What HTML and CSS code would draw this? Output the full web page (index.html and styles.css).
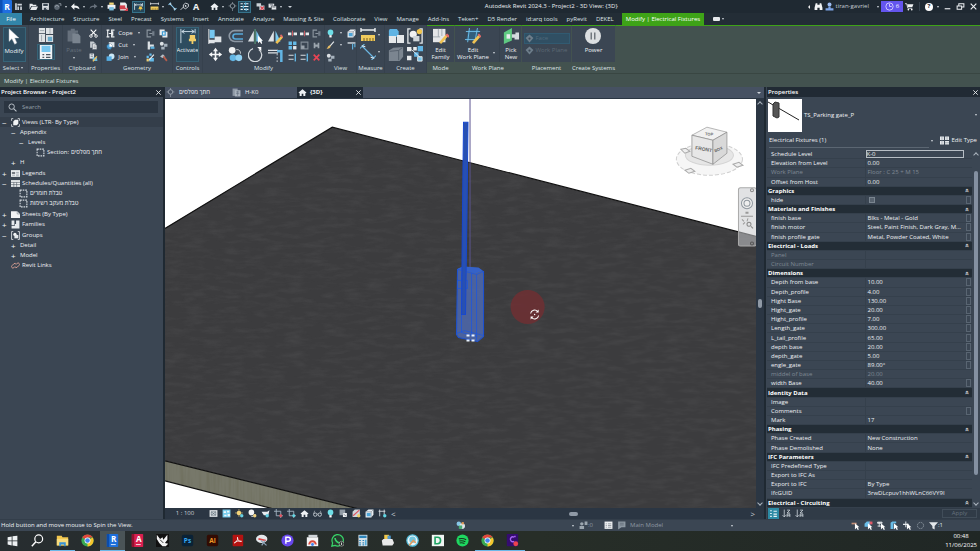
FILE: index.html
```html
<!DOCTYPE html>
<html lang="en">
<head>
<meta charset="utf-8">
<title>Autodesk Revit 2024.3 - Project2 - 3D View: {3D}</title>
<link rel="stylesheet" href="styles.css">
</head>
<body>
<svg class="defs" aria-hidden="true">
  <symbol id="home" viewBox="0 0 16 16"><path d="M1 8 8 2l7 6-1 1.500-1-.8V14H9.500v-4h-3v4H3V8.700l-1 .8z" fill="#eef1f4"/></symbol>
  <symbol id="start" viewBox="0 0 16 16"><path d="M2 2h3v12H2zM6 3h8v3H6zM6 8h3v6H6zM11 8h3v6h-3z" fill="#cdd3da"/></symbol>
  <symbol id="plan" viewBox="0 0 16 16"><path d="M1 1h9v13H1z" fill="#8d97a4"/><path d="M5 4h10v11H5z" fill="#aab3be"/><path d="M7 7h6M7 10h6M10 5v9" stroke="#5a6575"/></symbol>
  <symbol id="open" viewBox="0 0 16 16"><path d="M1 3h5l1 2h6v2H4l-3 6zM5 8h11l-3 6H2z" fill="#e8ebee"/></symbol>
  <symbol id="save" viewBox="0 0 16 16"><path d="M2 2h12v12H2z" fill="#dfe3e7"/><path d="M4 3h8v4H4zM5 10h6v4H5z" fill="#3a4652"/><path d="M9 10.500h1.500V13H9z" fill="#dfe3e7"/></symbol>
  <symbol id="sync" viewBox="0 0 16 16"><circle cx="7" cy="9" r="5" fill="#5c6772"/><path d="M4 9a3 3 0 0 1 6 0M10 3h4v4" fill="none" stroke="#929ba4" stroke-width="1.600"/></symbol>
  <symbol id="undo" viewBox="0 0 16 16"><path d="M6 2v4c6 0 9 2 9 7-2-2-5-3-9-3v4L0 8z" fill="#f1f3f5"/></symbol>
  <symbol id="redo" viewBox="0 0 16 16"><path d="M9 3v3c-5 0-8 2-8 6 2-2 4-3 8-3v3l6-4.500z" fill="#68727d"/></symbol>
  <symbol id="print" viewBox="0 0 16 16"><path d="M4 1h8v4H4z" fill="#f3d774"/><path d="M1 5h14v7H1z" fill="#eef1f4"/><path d="M4 9h8v6H4z" fill="#7cc0e0"/></symbol>
  <symbol id="pdf" viewBox="0 0 16 16"><path d="M2 1h9l3 3v11H2z" fill="#eceff1"/><path d="M1 6h10v7H1z" fill="#d4424e"/><path d="M9 9l6 6M15 10v5h-5" stroke="#d4424e" stroke-width="2" fill="none"/></symbol>
  <symbol id="dimbox" viewBox="0 0 16 16"><path d="M1 2v12M15 2v6M2 5h12M4 3 2 5l2 2M12 3l2 2-2 2" stroke="#dfe8ef" stroke-width="1.400" fill="none"/><path d="M9 8h5v3h1v2h-3v2h-1v-2H8v-2h1z" fill="#f2c84b"/></symbol>
  <symbol id="ruler" viewBox="0 0 16 16"><path d="M1 3h14M1 1v4M15 1v4" stroke="#eceff1" stroke-width="1.400"/><path d="M1 8h14v6H1z" fill="#f0cb5d"/><path d="M4 11v3M7 11v3M10 11v3M13 11v3" stroke="#765f20"/></symbol>
  <symbol id="dim" viewBox="0 0 16 16"><path d="M3 3l10 10M5 1 1 5M15 11l-4 4" stroke="#82c4ea" stroke-width="1.800"/><path d="M3 3l3 1M13 13l-3-1" stroke="#e9edf1" stroke-width="2"/></symbol>
  <symbol id="tag" viewBox="0 0 16 16"><path d="M1 14 6 9" stroke="#dfe3e7" stroke-width="1.500"/><path d="M6 5l4-3 5 2v4l-5 4-4-2z" fill="none" stroke="#dfe3e7" stroke-width="1.500"/><circle cx="10" cy="7" r="1.500" fill="#dfe3e7"/></symbol>
  <symbol id="section" viewBox="0 0 16 16"><circle cx="8" cy="7" r="4" fill="none" stroke="#aab3bc" stroke-width="1.300"/><path d="M8 0v3M8 11v5M1 7h3M12 7h3" stroke="#aab3bc"/></symbol>
  <symbol id="thin" viewBox="0 0 16 16"><path d="M1 3h4M7 3h8M1 8h4M7 8h8M1 13h4M7 13h8" stroke="#eef3f7" stroke-width="2"/><path d="M10 1v5M6 6v5M11 11v5" stroke="#57b6df" stroke-width="2"/></symbol>
  <symbol id="closehidden" viewBox="0 0 16 16"><path d="M1 2h8v6H1zM6 6h9v8H6z" fill="#c9d0d6"/><path d="M8 8l6 6M14 8l-6 6" stroke="#e04550" stroke-width="2"/></symbol>
  <symbol id="switch" viewBox="0 0 16 16"><path d="M1 3h10v7H1z" fill="#e7eaed"/><path d="M6 7h9v7H6z" fill="#e7eaed" stroke="#222b34"/><path d="M3 5h6M8 9h5" stroke="#46515c" stroke-width="1.300"/></symbol>
  <symbol id="arrow" viewBox="0 0 16 24"><path d="M1 1v18l4-4 4 8 3-2-3-7h6z" fill="#fff" stroke="#c4cad0" stroke-width=".6"/></symbol>
  <symbol id="family" viewBox="0 0 18 18"><path d="M1 1h7v6H1zM9 1h8v7H9zM1 8h7v9H1zM9 9h8v8H9z" fill="#dfe2e5"/><path d="M2 4h5M13.500 1v7M4 9v7" stroke="#9da5ad"/><path d="M11 11h5v5h-5z" fill="#68a9c9"/></symbol>
  <symbol id="props" viewBox="0 0 18 18"><path d="M2 0h14v18H2z" fill="#f0f2f4"/><path d="M4 2h10v7H4z" fill="#75c6ef"/><path d="M5 12h2M9 12h5M5 15h2M9 15h5" stroke="#4c5660" stroke-width="1.500"/></symbol>
  <symbol id="paste" viewBox="0 0 18 20"><path d="M1 3h4V1h5v2h4v3h-3v11H1z" fill="#66707c"/><path d="M7 7h7l3 3v9H7z" fill="#7a848f"/></symbol>
  <symbol id="cut" viewBox="0 0 16 16"><path d="M3 1l9 10M13 1 4 11" stroke="#fff" stroke-width="1.800"/><circle cx="3.500" cy="12.500" r="2.300" fill="none" stroke="#fff" stroke-width="1.500"/><circle cx="12.500" cy="12.500" r="2.300" fill="none" stroke="#fff" stroke-width="1.500"/></symbol>
  <symbol id="copy" viewBox="0 0 16 16"><path d="M2 1h6l3 3v8H2z" fill="#c6ccd2"/><path d="M6 5h5l3 3v7H6z" fill="#f2f4f5" stroke="#46515e"/><path d="M8 9h4M8 12h4" stroke="#46515e"/></symbol>
  <symbol id="match" viewBox="0 0 16 16"><path d="M1 1h8v9H1z" fill="#dfe3e7"/><path d="M3 3h4M3 6h4" stroke="#46515e"/><path d="M6 8h8l1 6H7z" fill="#65b6df"/><path d="M7 15 14 6" stroke="#eebd5a" stroke-width="2.500"/></symbol>
  <symbol id="cope" viewBox="0 0 16 16"><path d="M1 2h5M1 14h5M3 2v12M15 2h-5v12h5M5 8h5M12 4v8" stroke="#eceff1" stroke-width="2" fill="none"/></symbol>
  <symbol id="cutgeo" viewBox="0 0 16 16"><path d="M5 2h10v9H5z" fill="#dfe5ea"/><circle cx="6" cy="10" r="5" fill="#4ea4dc" stroke="#25384a"/><path d="M6 5a5 5 0 0 1 5 5H6z" fill="#fff"/></symbol>
  <symbol id="join" viewBox="0 0 16 16"><circle cx="10" cy="6" r="5" fill="#cce8f7"/><path d="M1 6h9v8H1z" fill="#56aee5"/></symbol>
  <symbol id="beam" viewBox="0 0 16 16"><path d="M9 2H2v12h7M6 8h7" stroke="#8c96a0" stroke-width="2" fill="none"/><path d="M11 4h4v8h-4z" fill="#727d89"/></symbol>
  <symbol id="wallj" viewBox="0 0 16 16"><path d="M3 1h4v5h7v4H7v5H3z" fill="#dce1e5"/><path d="M8 10h7v4H8z" fill="#5cb1df"/></symbol>
  <symbol id="demol" viewBox="0 0 16 16"><path d="M1 5h4v4H1zM6 1h4v4H6zM6 9h8v6H6z" fill="#65bbea"/><path d="M5 13 14 3" stroke="#eef0f2" stroke-width="2"/><path d="M1 10h4v5H1z" fill="#e9cd72"/></symbol>
  <symbol id="face" viewBox="0 0 16 16"><path d="M1 1h9v10H1zM6 5h9v10H6z" fill="#e7ebee"/><path d="M5 4h7v8H5z" fill="#3a9bd5"/><path d="M7 6h3v4H7z" fill="#e7ebee"/></symbol>
  <symbol id="paint" viewBox="0 0 16 16"><circle cx="5" cy="5" r="3.500" fill="#dce1e5"/><path d="M9 5h6v5H9zM4 10h6v5H4z" fill="#a7b3be"/></symbol>
  <symbol id="hammer" viewBox="0 0 16 16"><path d="M2 6l5-4 4 4-5 3z" fill="#b6bec6"/><path d="M8 6l6 8" stroke="#b85c4b" stroke-width="3"/></symbol>
  <symbol id="activate" viewBox="0 0 18 18"><path d="M1 1v16M17 1v5M2 4h14M5 2 2 4l3 2M13 2l3 2-3 2" stroke="#d5e4ee" fill="none"/><path d="M11 8h6v4h1v3h-3v3h-2v-3h-3v-3h1z" fill="#f0cd68"/></symbol>
  <symbol id="align" viewBox="0 0 18 18"><path d="M2 1h6v10H2z" fill="#75c6ef"/><path d="M8 9h8v7H8zM1 13h7v4H1z" fill="#dfe3e7"/><path d="M1 0v18" stroke="#fff"/></symbol>
  <symbol id="offset" viewBox="0 0 18 18"><path d="M18 2H8a6 6 0 0 0 0 13h10" stroke="#8c97a3" stroke-width="2" fill="none"/><path d="M18 6H9a3 3 0 0 0 0 6h9" stroke="#57a9da" stroke-width="2" fill="none"/></symbol>
  <symbol id="mirror" viewBox="0 0 18 18"><path d="M7 2v13H0z" fill="#dfe3e7"/><path d="M10 2v13h7z" fill="#7bc9ef"/><path d="M8.500 0v18" stroke="#63b883"/><path d="M12 8v9l2-2 2 3 1-1-1-3h2z" fill="#fff"/></symbol>
  <symbol id="mirrorp" viewBox="0 0 18 18"><path d="M7 2v13H0z" fill="#dfe3e7"/><path d="M9 2v13h6z" fill="#7bc9ef"/><path d="M10 17l7-8" stroke="#f0c354" stroke-width="3"/><path d="M15 7l3 3" stroke="#e36a6b" stroke-width="2"/></symbol>
  <symbol id="move" viewBox="0 0 18 18"><path d="M9 1l3 4h-2v3h3V6l4 3-4 3v-2h-3v3h2l-3 4-3-4h2v-3H5v2L1 9l4-3v2h3V5H6z" fill="#f5f6f7"/></symbol>
  <symbol id="copym" viewBox="0 0 18 18"><circle cx="5" cy="4" r="4" fill="#f0f2f3"/><circle cx="6" cy="13" r="4" fill="#62b5e4"/><circle cx="13" cy="13" r="4" fill="#8fd1f3"/><path d="M10 3c4 0 5 2 5 5" stroke="#dce1e5" fill="none"/></symbol>
  <symbol id="rotate" viewBox="0 0 18 18"><path d="M13 3a8 8 0 1 1-7-1" fill="none" stroke="#d5dade" stroke-width="1.500"/><path d="M11 0h5v5z" fill="#fff"/></symbol>
  <symbol id="trim" viewBox="0 0 18 18"><path d="M0 4h12M0 7h12" stroke="#dfe3e7" stroke-width="1.500"/><path d="M11 5h5v13" stroke="#62b5e4" stroke-width="3" fill="none"/><path d="M11 8v10" stroke="#dfe3e7" stroke-dasharray="2"/></symbol>
  <symbol id="split" viewBox="0 0 16 16"><path d="M0 6h6v5H0zM10 6h6v5h-6z" fill="#e8ebed"/><path d="M8 3v10" stroke="#e15b63" stroke-width="1.500"/></symbol>
  <symbol id="array" viewBox="0 0 16 16"><path d="M1 1h6v6H1zM9 1h6v6H9zM1 9h6v6H1z" fill="#65bbe9"/><path d="M9 9h6v6H9z" fill="#e3e8ec"/></symbol>
  <symbol id="scale" viewBox="0 0 16 16"><path d="M2 2h12v12H2z" fill="none" stroke="#818b96" stroke-width="2"/><path d="M2 8h6v6H2z" fill="#9aa3ac"/></symbol>
  <symbol id="trims" viewBox="0 0 16 16"><path d="M1 4h9M1 11h9" stroke="#d9dee2" stroke-width="2"/><path d="M13 1v14" stroke="#63b7e3" stroke-width="2.500"/></symbol>
  <symbol id="unpin" viewBox="0 0 16 16"><path d="M3 3h3v3h4V3h3v10h-3v-3H6v3H3z" fill="#9ba5ae"/></symbol>
  <symbol id="del" viewBox="0 0 16 16"><path d="M3 3l10 10M13 3 3 13" stroke="#e94454" stroke-width="3"/></symbol>
  <symbol id="bulb" viewBox="0 0 16 16"><circle cx="8" cy="6" r="5" fill="#6edee7"/><path d="M6 11h4v4H6z" fill="#fff"/></symbol>
  <symbol id="brush" viewBox="0 0 16 16"><path d="M14 1 7 9" stroke="#e8ebed" stroke-width="2"/><path d="M8 8c1 5-4 6-7 6 3-3 2-6 7-6" fill="#e8bd64"/></symbol>
  <symbol id="cube" viewBox="0 0 16 16"><path d="M1 5l5-4h9v9l-4 5H1z" fill="#e9eef2"/><path d="M3 7h7v6H3z" fill="#4fa5d8"/><path d="M1 5h10v10M11 5l4-4" stroke="#6e7a85" fill="none"/></symbol>
  <symbol id="lines" viewBox="0 0 16 16"><path d="M1 2h14v3H1z" fill="#bcc4cc"/><path d="M10 5v10M14 5v6" stroke="#62b7e4" stroke-width="2"/></symbol>
  <symbol id="dimbig" viewBox="0 0 18 18"><path d="M2 2l14 14M5 0 0 5M18 13l-5 5" stroke="#6cb6e2" stroke-width="1.300"/><path d="M2 2l4 1M16 16l-4-1" stroke="#fff"/></symbol>
  <symbol id="asm" viewBox="0 0 18 18"><path d="M2 1h8l2 3v6H1V3z" fill="#60b4e4"/><path d="M1 9h8v8H1zM10 8h8v9h-8z" fill="#e6e9eb"/></symbol>
  <symbol id="group" viewBox="0 0 18 18"><path d="M4 1H1v16h3M14 1h3v16h-3" stroke="#e3e7ea" stroke-width="1.500" fill="none"/><circle cx="7" cy="7" r="4" fill="#f1f2f3"/><path d="M7 9h7v6H7z" fill="#d0d6db"/><circle cx="14" cy="4" r="3" fill="#f1c64f"/></symbol>
  <symbol id="parts" viewBox="0 0 18 18"><path d="M1 5l5-3 11-1v11l-4 5H1z" fill="#7b8590"/><path d="M2 6l10-1 4-3M12 5v11" stroke="#525d69" fill="none"/></symbol>
  <symbol id="similar" viewBox="0 0 18 18"><path d="M0 1h5v5H0zM0 11h5v5H0zM7 1h4v4H7z" fill="#e9ecee"/><path d="M12 0h6v6h-6zM8 7h5v5H8z" fill="#61b6e6"/><path d="M5 4l10 9M12 12h5v5h-5z" fill="#75c5eb" stroke="#e9ecee"/></symbol>
  <symbol id="editfam" viewBox="0 0 18 18"><path d="M0 1h14v15H0z" fill="#e4e6e8"/><path d="M6 1v9M10 1v8M0 10h8" stroke="#9da5ad"/><path d="M8 17l8-9" stroke="#f0c354" stroke-width="3"/><path d="M15 7l3 3" stroke="#e2696a" stroke-width="2.500"/></symbol>
  <symbol id="editwp" viewBox="0 0 18 18"><path d="M4 2h12l-3 12H1z" fill="#315e7c"/><path d="M5 0 3 16M14 0l-3 16M1 4h16M0 13h14" stroke="#72c3ee"/><path d="M9 17l7-8" stroke="#f0c354" stroke-width="3"/><path d="M15 7l3 3" stroke="#e2696a" stroke-width="2"/></symbol>
  <symbol id="pick" viewBox="0 0 18 18"><path d="M1 5 10 0v14L1 18z" fill="#5fc982"/><path d="M4 7h4v5H4z" fill="#e9ecee"/><path d="M10 7l4 0V5h4v8h-5v-2h-3z" fill="#d3d9de"/></symbol>
  <symbol id="power" viewBox="0 0 18 18"><circle cx="9" cy="9" r="9" fill="#dcdfe1"/><path d="M7 5v8M11 5v8" stroke="#656c73" stroke-width="1.500"/></symbol>
  <symbol id="diamond" viewBox="0 0 16 16"><path d="M8 1l7 6-7 8-7-8z" fill="#6e7e8b"/><circle cx="8" cy="8" r="2" fill="#3c4855"/></symbol>
  <symbol id="binoc" viewBox="0 0 16 16"><path d="M3 2h3v3h4V2h3l2 8v4h-5v-4H6v4H1v-4z" fill="#f1f3f5"/></symbol>
  <symbol id="user" viewBox="0 0 16 16"><circle cx="8" cy="4.500" r="3.500" fill="#9dbdf3"/><path d="M6 8h4v3h5v4H1v-4h5z" fill="#7ea5e6"/></symbol>
  <symbol id="clock" viewBox="0 0 16 16"><circle cx="8" cy="8" r="6.500" fill="none" stroke="#dcd8ff" stroke-width="1.500"/><path d="M8 3v5h4" stroke="#dcd8ff" stroke-width="1.500" fill="none"/></symbol>
  <symbol id="cart" viewBox="0 0 16 16"><path d="M0 3h3l2 8h8" stroke="#f1f3f5" stroke-width="1.500" fill="none"/><path d="M4 4h11l-2 5H5z" fill="#f1f3f5"/><circle cx="6" cy="13.500" r="1.500" fill="#fff"/><circle cx="12" cy="13.500" r="1.500" fill="#fff"/></symbol>
  <symbol id="minus" viewBox="0 0 16 16"><path d="M3 12h10" stroke="#eef1f4" stroke-width="2"/></symbol>
  <symbol id="restore" viewBox="0 0 16 16"><path d="M2 7h8v6H2zM5 7V3h9v6h-4" fill="none" stroke="#eef1f4" stroke-width="1.800"/></symbol>
  <symbol id="x" viewBox="0 0 16 16"><path d="M3 3l10 10M13 3 3 13" stroke="#eef1f4" stroke-width="2"/></symbol>
  <symbol id="find" viewBox="0 0 16 16"><circle cx="6.500" cy="6.500" r="4.800" fill="none" stroke="#c3cad1" stroke-width="1.600"/><path d="M10 10l5 5" stroke="#c3cad1" stroke-width="1.800"/></symbol>
  <symbol id="views" viewBox="0 0 16 16"><path d="M4 1H1v4M12 1h3v4M4 15H1v-4M12 15h3v-4" fill="none" stroke="#dfe3e7" stroke-width="1.400"/><path d="M4 6l3-3h6v7l-3 3H4z" fill="#f2f4f5"/></symbol>
  <symbol id="dotted" viewBox="0 0 16 16"><path d="M2 2h12v12H2z" fill="none" stroke="#d3d9df" stroke-width="2" stroke-dasharray="3 1.500"/></symbol>
  <symbol id="legend" viewBox="0 0 16 16"><path d="M0 2h16v12H0z" fill="#edf0f2"/><path d="M2 6h5v2H2zM9 6h5M2 11h5M9 9h5M9 12h5" stroke="#6e7984"/></symbol>
  <symbol id="sched" viewBox="0 0 16 16"><path d="M0 2h16v12H0z" fill="#edf0f2"/><path d="M0 6h16M5 6v8M10 6v8M0 10h16" stroke="#424e5a"/></symbol>
  <symbol id="sheet" viewBox="0 0 16 16"><path d="M0 2h11l5 5v7H0z" fill="#f0f2f4"/><path d="M11 2v5h5" fill="none" stroke="#737e89"/></symbol>
  <symbol id="fams" viewBox="0 0 16 16"><path d="M1 1h5v8H1zM9 1h6v6H9zM1 10h14v5H1zM7 7h8v4H7z" fill="#e7eaed"/></symbol>
  <symbol id="etype" viewBox="0 0 16 16"><path d="M0 1h7v6H0zM9 1h7v6H9zM0 9h7v6H0zM9 9h7v6H9z" fill="#e7eaed"/><path d="M3.500 1v14M12.500 1v6M9 12h7" stroke="#7a8590"/></symbol>
  <symbol id="groups" viewBox="0 0 16 16"><path d="M4 1H1v14h3M12 1h3v14h-3" fill="none" stroke="#dfe3e7" stroke-width="1.500"/><circle cx="7" cy="6" r="3" fill="#f2f4f5"/><path d="M6 7h7v6H6z" fill="#e4e8eb"/></symbol>
  <symbol id="link" viewBox="0 0 16 16"><path d="M7 10l-2 2a2.500 2.500 0 0 1-3-4l3-3a2.500 2.500 0 0 1 4 1M9 6l2-2a2.500 2.500 0 0 1 3 4l-3 3a2.500 2.500 0 0 1-4-1" fill="none" stroke="#d9a093" stroke-width="1.700"/></symbol>
  <symbol id="shaded" viewBox="0 0 16 16"><path d="M1 2h14v12H1z" fill="#e0e5e8"/><path d="M4 5h8v6H4zM4 5l8 6M12 5l-8 6" stroke="#50606c" fill="none"/></symbol>
  <symbol id="vstyle" viewBox="0 0 16 16"><path d="M1 1h14v14H1z" fill="#79cdec"/><path d="M3 4h4v3H3zM9 3h4v3H9zM4 10h4v3H4zM10 9h4v4h-4z" fill="#eff8fb"/></symbol>
  <symbol id="sun" viewBox="0 0 16 16"><circle cx="7" cy="7" r="4" fill="#f3d379"/><path d="M7 0v14M0 7h14" stroke="#f3d379"/><circle cx="12" cy="12" r="3" fill="#67cee0"/></symbol>
  <symbol id="shadow" viewBox="0 0 16 16"><circle cx="6" cy="6" r="5" fill="#f3f4f5"/><path d="M6 13c4 1 6-1 7-4" stroke="#bcc4ca" stroke-width="2" fill="none"/><circle cx="12" cy="12" r="3" fill="#f1d17b"/></symbol>
  <symbol id="teapot" viewBox="0 0 16 16"><path d="M2 5h9l4-3-2 9H5L1 5z" fill="#e8ecef"/><circle cx="11" cy="12" r="3" fill="#62cfe2"/></symbol>
  <symbol id="crop" viewBox="0 0 16 16"><path d="M4 0v12h12M0 4h12v12" stroke="#a9bac8" stroke-width="1.500" fill="none"/><circle cx="12" cy="12" r="2.600" fill="#de5562"/></symbol>
  <symbol id="cropv" viewBox="0 0 16 16"><path d="M4 0v12h12M0 4h12v12" stroke="#a9bac8" stroke-width="1.500" fill="none"/><circle cx="12" cy="12" r="2.600" fill="#61d6e4"/></symbol>
  <symbol id="glasses" viewBox="0 0 16 16"><circle cx="4" cy="10" r="3" fill="none" stroke="#cdd4da" stroke-width="1.500"/><circle cx="12" cy="10" r="3" fill="none" stroke="#cdd4da" stroke-width="1.500"/><path d="M7 9h2M1 9l2-6M15 9l-2-6" stroke="#cdd4da"/></symbol>
  <symbol id="tempv" viewBox="0 0 16 16"><path d="M1 1h10v10H1z" fill="#929ca6"/><path d="M4 4l4-2M7 7h7v7H7z" fill="#edf0f2"/><path d="M8 9l5 4" stroke="#49535e"/></symbol>
  <symbol id="analyt" viewBox="0 0 16 16"><path d="M1 5l4-4h9v9l-4 4H1z" fill="#d0d6db"/><path d="M2 12 13 2" stroke="#de5562" stroke-width="2"/><circle cx="12" cy="12" r="3" fill="#f0cd6a"/></symbol>
  <symbol id="cons" viewBox="0 0 16 16"><path d="M1 4h12M3 1v12M11 1v9" stroke="#dfe3e7" stroke-width="1.500"/><circle cx="12" cy="12" r="3" fill="#61d6e4"/></symbol>
  <symbol id="people" viewBox="0 0 16 16"><circle cx="5" cy="5" r="3" fill="#9ca6af"/><path d="M1 9h8v5H1zM10 1h5v6h-5z" fill="#9ca6af"/></symbol>
  <symbol id="list" viewBox="0 0 16 16"><path d="M1 1h14v13H1z" fill="#eef0f2"/><path d="M3 5h2M7 5h6M3 8h2M7 8h6M3 11h2M7 11h6" stroke="#59646f"/></symbol>
  <symbol id="list2" viewBox="0 0 16 16"><path d="M2 1h13v10H8l-6 4z" fill="#8d98a2"/><path d="M5 4h7M5 7h7" stroke="#4d5863"/></symbol>
  <symbol id="worker" viewBox="0 0 16 16"><circle cx="5" cy="5" r="4" fill="#86c6e8"/><circle cx="11" cy="9" r="5" fill="#dbe3e8"/><path d="M5 8h6v6H5z" fill="#48ad75"/><path d="M10 2h4v4h-4z" fill="#e49b54"/></symbol>
  <symbol id="sel" viewBox="0 0 16 16"><path d="M1 3h9v3H1z" fill="#c48f77"/><path d="M7 4v11l3-3 2 4 2-1-2-4h3z" fill="#fff"/></symbol>
  <symbol id="selb" viewBox="0 0 16 16"><path d="M1 5l4-4h6v9H1z" fill="#69bde8"/><path d="M10 1h5v5h-5z" fill="#df5967"/><path d="M7 4v11l3-3 2 4 2-1-2-4h3z" fill="#fff"/></symbol>
  <symbol id="self" viewBox="0 0 16 16"><path d="M1 3l3-2h7v3H6v10H1z" fill="#69bde8"/><path d="M7 4v11l3-3 2 4 2-1-2-4h3z" fill="#fff"/></symbol>
  <symbol id="selp" viewBox="0 0 16 16"><path d="M1 2h8v2H1zM4 2v8M1 9h6" fill="#e5e9ec" stroke="#e5e9ec" stroke-width="1.500"/><path d="M7 4v11l3-3 2 4 2-1-2-4h3z" fill="#fff"/></symbol>
  <symbol id="seld" viewBox="0 0 16 16"><path d="M0 6h10M5 1v10" stroke="#e5e9ec" stroke-width="1.800"/><path d="M7 4v11l3-3 2 4 2-1-2-4h3z" fill="#fff"/></symbol>
  <symbol id="gear" viewBox="0 0 16 16"><circle cx="8" cy="8" r="5.500" fill="none" stroke="#8e99a3" stroke-width="1.500" stroke-dasharray="3 1.300"/></symbol>
  <symbol id="filter" viewBox="0 0 16 16"><path d="M0 2h16l-6 7v6l-4-2V9z" fill="#e4e8eb"/></symbol>
  <symbol id="cats" viewBox="0 0 16 16"><path d="M2 3h3M2 8h3M2 13h3M8 4h6M8 9h6M8 13h6" stroke="#e5f4f8" stroke-width="2"/></symbol>
  <symbol id="sort" viewBox="0 0 16 16"><path d="M4 1v13M1 11l3 3 3-3M9 2h5l-5 5h5M9 14V9h5v5M9 12h5" stroke="#cfd6dc" stroke-width="1.400" fill="none"/></symbol>
</svg>

<header class="titlebar">
  <div class="qat">
    <svg class="rlogo" viewBox="0 0 24 26" role="img" aria-label="Revit"><rect width="24" height="26" rx="2" fill="#1f6fe0"/><path d="M0 0h5v26H0z" fill="#0d4fb5"/><text x="14" y="20" text-anchor="middle" class="logo-r">R</text></svg>
    <button aria-label="Home view"><svg><use href="#start"/></svg></button>
    <i class="gap"></i>
    <button aria-label="Open"><svg><use href="#open"/></svg></button>
    <button aria-label="Save"><svg><use href="#save"/></svg></button>
    <button aria-label="Synchronize"><svg><use href="#sync"/></svg></button>
    <i class="drop"></i>
    <button aria-label="Undo"><svg><use href="#undo"/></svg></button><i class="drop"></i>
    <button aria-label="Redo"><svg><use href="#redo"/></svg></button><i class="drop"></i>
    <button aria-label="Print"><svg><use href="#print"/></svg></button>
    <button aria-label="Export PDF"><svg><use href="#pdf"/></svg></button>
    <i class="gap"></i>
    <button class="on" aria-label="Activate controls"><svg><use href="#dimbox"/></svg></button>
    <i class="gap"></i>
    <button aria-label="Measure"><svg><use href="#ruler"/></svg></button><i class="drop"></i>
    <button aria-label="Aligned dimension"><svg><use href="#dim"/></svg></button>
    <button aria-label="Tag"><svg><use href="#tag"/></svg></button>
    <button class="letter">A</button>
    <i class="gap"></i><i class="gap"></i>
    <button aria-label="3D view"><svg><use href="#home"/></svg></button><i class="drop"></i>
    <button aria-label="Section"><svg><use href="#section"/></svg></button>
    <button class="on" aria-label="Thin lines"><svg><use href="#thin"/></svg></button>
    <i class="gap"></i>
    <button aria-label="Close inactive"><svg><use href="#closehidden"/></svg></button>
    <button aria-label="Switch windows"><svg><use href="#switch"/></svg></button><i class="drop"></i>
    <i class="drop wide"></i>
  </div>
  <h1>Autodesk Revit 2024.3 - Project2 - 3D View: {3D}</h1>
  <div class="account">
    <i class="left"></i>
    <button aria-label="Search"><svg><use href="#binoc"/></svg></button>
    <button class="user"><svg><use href="#user"/></svg>tiran-gavriel</button>
    <i class="drop"></i>
    <button class="trial"><svg><use href="#clock"/></svg><span>6</span></button>
    <button aria-label="Store"><svg><use href="#cart"/></svg></button>
    <i class="vline"></i>
    <button class="help">?</button><i class="drop"></i>
    <button aria-label="Minimize"><svg><use href="#minus"/></svg></button>
    <button aria-label="Restore"><svg><use href="#restore"/></svg></button>
    <button aria-label="Close"><svg><use href="#x"/></svg></button>
  </div>
</header>

<nav class="tabs">
  <button class="file">File</button>
  <button>Architecture</button><button>Structure</button><button>Steel</button><button>Precast</button><button>Systems</button><button>Insert</button><button>Annotate</button><button>Analyze</button><button>Massing &amp; Site</button><button>Collaborate</button><button>View</button><button>Manage</button><button>Add-Ins</button><button>Teken+</button><button>D5 Render</button><button>id:arq tools</button><button>pyRevit</button><button>DEKEL</button>
  <button class="context">Modify | Electrical Fixtures</button>
  <button class="pill" aria-label="Ribbon display"><i></i><i class="drop"></i></button>
</nav>

<section class="ribbon">
  <div class="group g-select"><div class="body"><button class="big on"><svg class="tall"><use href="#arrow"/></svg>Modify</button></div><h2>Select <i class="drop"></i></h2></div>
  <div class="group g-props"><div class="body stack"><svg class="l"><use href="#family"/></svg><span class="on"><svg class="l"><use href="#props"/></svg></span></div><h2>Properties</h2></div>
  <div class="group g-clip"><div class="body"><button class="big off"><svg class="l"><use href="#paste"/></svg>Paste<i class="drop"></i></button><div class="col"><svg><use href="#cut"/></svg><svg><use href="#copy"/></svg><svg><use href="#match"/></svg></div></div><h2>Clipboard</h2></div>
  <div class="group g-geo"><div class="body">
    <div class="col text"><button><svg><use href="#cope"/></svg>Cope<i class="drop"></i></button><button><svg><use href="#cutgeo"/></svg>Cut<i class="drop"></i></button><button><svg><use href="#join"/></svg>Join<i class="drop"></i></button></div>
    <div class="col"><svg><use href="#beam"/></svg><svg><use href="#wallj"/></svg><svg><use href="#demol"/></svg></div>
    <div class="col"><svg><use href="#face"/></svg><svg><use href="#paint"/></svg><svg><use href="#hammer"/></svg></div></div><h2>Geometry</h2></div>
  <div class="group g-ctl"><div class="body"><button class="big on"><svg class="l"><use href="#activate"/></svg>Activate</button></div><h2>Controls</h2></div>
  <div class="group g-mod"><div class="body">
    <div class="grid4"><svg class="l"><use href="#align"/></svg><svg class="l"><use href="#offset"/></svg><svg class="l"><use href="#mirror"/></svg><svg class="l"><use href="#mirrorp"/></svg><svg class="l"><use href="#move"/></svg><svg class="l"><use href="#copym"/></svg><svg class="l"><use href="#rotate"/></svg><svg class="l"><use href="#trim"/></svg></div>
    <div class="grid3"><svg><use href="#split"/></svg><svg><use href="#split"/></svg><svg><use href="#beam"/></svg><svg><use href="#array"/></svg><svg><use href="#scale"/></svg><svg><use href="#unpin"/></svg><svg><use href="#trims"/></svg><svg><use href="#trims"/></svg><svg><use href="#del"/></svg></div></div><h2>Modify</h2></div>
  <div class="group g-view"><div class="body">
    <div class="col text"><button aria-label="Hide"><svg><use href="#bulb"/></svg><i class="drop"></i></button><button aria-label="Override"><svg><use href="#brush"/></svg><i class="drop"></i></button><button aria-label="Displace"><svg><use href="#paint"/></svg></button></div>
    <div class="col"><svg><use href="#cube"/></svg><svg><use href="#lines"/></svg><svg></svg></div></div><h2>View</h2></div>
  <div class="group g-meas"><div class="body stack"><span><svg class="l"><use href="#ruler"/></svg><i class="drop"></i></span><span><svg class="l"><use href="#dimbig"/></svg><i class="drop"></i></span></div><h2>Measure</h2></div>
  <div class="group g-create"><div class="body"><div class="grid2"><svg class="l"><use href="#asm"/></svg><svg class="l"><use href="#group"/></svg><svg class="l"><use href="#parts"/></svg><svg class="l"><use href="#similar"/></svg></div></div><h2>Create</h2></div>
  <div class="group ctx g-mode"><div class="body"><button class="big"><svg class="l"><use href="#editfam"/></svg>Edit<br>Family</button></div><h2>Mode</h2></div>
  <div class="group ctx g-wp"><div class="body"><button class="big"><svg class="l"><use href="#editwp"/></svg>Edit<br>Work Plane</button><i class="drop"></i><button class="big new"><svg class="l"><use href="#pick"/></svg>Pick<br>New</button></div><h2>Work Plane</h2></div>
  <div class="group ctx g-place"><div class="body"><div class="col opts"><button class="sel" disabled><svg><use href="#diamond"/></svg>Face</button><button disabled><svg><use href="#diamond"/></svg>Work Plane</button></div></div><h2>Placement</h2></div>
  <div class="group ctx g-sys"><div class="body"><button class="big"><svg class="l"><use href="#power"/></svg>Power</button></div><h2>Create Systems</h2></div>
</section>
<div class="optionsbar">Modify | Electrical Fixtures</div>

<main>
  <aside class="browser">
    <div class="panelhead"><h2>Project Browser - Project2</h2><button aria-label="Close browser"><svg><use href="#x"/></svg></button></div>
    <label class="search"><svg><use href="#find"/></svg><input type="text" placeholder="Search" aria-label="Search"></label>
    <ul class="tree">
      <li class="root hot"><b>−</b><svg><use href="#views"/></svg>Views (LTR- By Type)</li>
      <li class="d1"><b>−</b>Appendix</li>
      <li class="d2"><b>−</b>Levels</li>
      <li class="d3"><svg><use href="#dotted"/></svg>Section: <bdi>חתך מפלסים</bdi></li>
      <li class="d1"><b>+</b>H</li>
      <li class="root spaced"><b>+</b><svg><use href="#legend"/></svg>Legends</li>
      <li class="root"><b>−</b><svg><use href="#sched"/></svg>Schedules/Quantities (all)</li>
      <li class="d2 leaf"><svg><use href="#dotted"/></svg><bdi>טבלת חומרים</bdi></li>
      <li class="d2 leaf"><svg><use href="#dotted"/></svg><bdi>טבלת מעקב רשימות</bdi></li>
      <li class="root spaced"><b>+</b><svg><use href="#sheet"/></svg>Sheets (By Type)</li>
      <li class="root"><b>+</b><svg><use href="#fams"/></svg>Families</li>
      <li class="root spaced"><b>−</b><svg><use href="#groups"/></svg>Groups</li>
      <li class="d1"><b>+</b>Detail</li>
      <li class="d1"><b>+</b>Model</li>
      <li class="root"><b></b><svg><use href="#link"/></svg>Revit Links</li>
    </ul>
  </aside>

  <section class="workspace">
    <div class="viewtabs">
      <button class="vt"><svg><use href="#section"/></svg><bdi>חתך מפלסים</bdi></button>
      <button class="vt"><svg><use href="#plan"/></svg>H-K0</button>
      <button class="vt active"><svg><use href="#home"/></svg><span>{3D}</span><svg><use href="#x"/></svg></button>
      <i class="drop wide"></i>
    </div>
    <div class="canvasrow">
      <svg class="scene" viewBox="0 0 590 410" preserveAspectRatio="xMidYMid slice" role="img" aria-label="3D view of a parking gate on a slab">
        <defs>
          <filter id="grain" x="0" y="0" width="100%" height="100%"><feTurbulence type="fractalNoise" baseFrequency=".05 .2" numOctaves="3" seed="4"/><feColorMatrix values="0 0 0 0 .5  0 0 0 0 .5  0 0 0 0 .5  .9 0 0 0 -.36"/></filter>
          <filter id="streak" x="0" y="0" width="100%" height="100%"><feTurbulence type="fractalNoise" baseFrequency=".35 .02" numOctaves="2" seed="2"/><feColorMatrix values="0 0 0 0 .15  0 0 0 0 .15  0 0 0 0 .1  1.600 0 0 0 -.65"/></filter>
          <clipPath id="top"><path d="M0 130 167 29 590 138V410H193L0 362z"/></clipPath>
          <clipPath id="edge"><path d="M0 362 193 410h-85L0 382z"/></clipPath>
        </defs>
        <rect width="590" height="410" fill="#fff"/>
        <path d="M0 130 167 29 590 138V410H193L0 362z" fill="#3c3c3e"/>
        <g clip-path="url(#top)"><rect width="590" height="410" filter="url(#grain)" opacity=".16"/></g>
        <path d="M0 362 193 410h-85L0 382z" fill="#77786a"/>
        <g clip-path="url(#edge)"><rect y="350" width="200" height="60" filter="url(#streak)"/></g>
        <path d="M0 130 167 29 590 138M0 362l193 48M0 382l108 28" fill="none" stroke="#111" stroke-width="1.200"/>
        <path d="M304.500 0v172" stroke="#5d5590"/>
        <path d="M292 171l5-2 15 1 6 3v65l-6 5-19-4-2-3z" fill="#4d68ae" fill-opacity=".85" stroke="#1b52d4"/>
        <path d="M292 171l19 5 7-3M311 176v66M296 174v60l16 4M306 174v64M292 182h10v8h-10zM291 235l8-3 19 5" fill="none" stroke="#1e57dc" stroke-width=".8"/>
        <path d="M292 170l6-2 15 1 4 3-7 3z" fill="#3562c8"/>
        <path d="M298 24h4.500l-1 90-1.500 102h-4l1-102z" fill="#2850b0" stroke="#1748d0"/>
        <path d="M301 236h3v2h-3zM306 236h3v2h-3zM301 241h3v2h-3zM306 241h3v2h-3z" fill="#eaf4ff"/>
        <circle cx="362" cy="208.500" r="17" fill="#6e2f33" fill-opacity=".85"/>
        <path d="M365 215a4 4 0 0 1 7-2M373 217a4 4 0 0 1-7 2" fill="none" stroke="#fff"/><path d="M373 211v3h-3zM365 221v-3h3z" fill="#fff"/><circle cx="369" cy="216" r=".7" fill="#fff"/>
        <ellipse cx="543.500" cy="61" rx="33" ry="16" fill="#f6f6f6" stroke="#cfcfcf" stroke-dasharray="4 2"/>
        <ellipse cx="543.500" cy="57" rx="24" ry="10" fill="#e6e6e6" stroke="#d5d5d5"/>
        <path d="M515 51l5-1 4 3-5 2zM519 72l6-2 4 3-6 2zM567 66l6-2 4 3-6 2z" fill="#eee" stroke="#aaa"/>
        <path d="M526 37l15-8 20 5-14 8z" fill="#f1f1f1" stroke="#999" stroke-width=".7"/>
        <path d="M526 37l21 5v24l-21-8z" fill="#e7e7e7" stroke="#8a8a8a" stroke-width=".7"/>
        <path d="M547 42l14-8v21l-14 11z" fill="#d9d9d9" stroke="#8a8a8a" stroke-width=".7"/>
        <text class="cubetext" x="529" y="51" transform="rotate(10 529 51)">FRONT</text>
        <text class="cubetext small" x="549" y="54" transform="rotate(-22 549 54)">BOX</text>
        <text class="cubetext small" x="539" y="37" transform="rotate(4 539 37)">TOP</text>
        <rect x="572.500" y="89.500" width="18" height="58" rx="2" fill="#c9cbcd" fill-opacity=".55" stroke="#aaa"/>
        <circle cx="581" cy="105" r="5.500" fill="#eee" stroke="#8e969e"/><circle cx="581" cy="105" r="3" fill="none" stroke="#8e969e"/>
        <circle cx="586" cy="92" r="1.500" fill="none" stroke="#888"/><circle cx="586" cy="145" r="1.500" fill="none" stroke="#555"/>
        <path d="M580 114h2v1h-2zM575 118h12M576 121l2 2M577 126l2-2M582 120l-1 3" stroke="#999" fill="none"/><circle cx="583" cy="126" r="2" fill="none" stroke="#888"/><path d="M585 128l2 2" stroke="#888"/>
      </svg>
      <div class="vscroll"><i class="up"></i><i class="thumb"></i><i class="dn"></i></div>
    </div>
    <div class="viewbar">
      <button class="scale">1 : 100</button>
      <svg><use href="#shaded"/></svg><svg><use href="#vstyle"/></svg><svg><use href="#sun"/></svg><svg><use href="#shadow"/></svg><svg><use href="#teapot"/></svg><svg><use href="#crop"/></svg><svg><use href="#cropv"/></svg><svg><use href="#home"/></svg><svg><use href="#glasses"/></svg><svg><use href="#bulb"/></svg><svg><use href="#tempv"/></svg><svg><use href="#analyt"/></svg><svg><use href="#cube"/></svg><svg><use href="#cons"/></svg>
      <span class="lt">&lt;</span><div class="hscroll"><i></i></div><span class="gt">&gt;</span>
    </div>
  </section>

  <aside class="properties">
    <div class="panelhead"><h2>Properties</h2><button aria-label="Close properties"><svg><use href="#x"/></svg></button></div>
    <div class="type"><svg class="thumbnail" viewBox="0 0 34 33"><rect width="34" height="33" fill="#fff"/><path d="M0 3 31 21" stroke="#222"/><path d="M5 5l2-2 4 1v14l-2 1-4-2z" fill="#555" stroke="#333"/></svg><span>TS_Parking gate_P</span><i class="drop"></i></div>
    <div class="filter"><select aria-label="Category"><option>Electrical Fixtures (1)</option></select><i class="drop"></i><button><svg><use href="#etype"/></svg>Edit Type</button></div>
    <div class="tablewrap">
      <table>
        <tbody>
        <tr><th>Schedule Level</th><td><input type="text" value="K-0" aria-label="Schedule Level"></td><td></td></tr>
        <tr><th>Elevation from Level</th><td>0.00</td><td></td></tr>
        <tr class="dim"><th>Work Plane</th><td>Floor : C 25 + M 15</td><td></td></tr>
        <tr><th>Offset from Host</th><td>0.00</td><td></td></tr>
        <tr class="head"><th colspan="2">Graphics</th><td>«</td></tr>
        <tr><th>hide</th><td><input type="checkbox" checked disabled aria-label="hide"></td><td><button aria-label="Associate hide"></button></td></tr>
        <tr class="head"><th colspan="2">Materials and Finishes</th><td>«</td></tr>
        <tr><th>finish base</th><td>Blks - Metal - Gold</td><td><button aria-label="Associate"></button></td></tr>
        <tr><th>finish motor</th><td>Steel, Paint Finish, Dark Gray, M...</td><td><button aria-label="Associate"></button></td></tr>
        <tr><th>finish profile gate</th><td>Metal, Powder Coated, White</td><td><button aria-label="Associate"></button></td></tr>
        <tr class="head"><th colspan="2">Electrical - Loads</th><td>«</td></tr>
        <tr class="dim"><th>Panel</th><td></td><td></td></tr>
        <tr class="dim"><th>Circuit Number</th><td></td><td></td></tr>
        <tr class="head"><th colspan="2">Dimensions</th><td>«</td></tr>
        <tr><th>Depth from base</th><td>10.00</td><td><button aria-label="Associate"></button></td></tr>
        <tr><th>Depth_profile</th><td>4.00</td><td><button aria-label="Associate"></button></td></tr>
        <tr><th>Hight Base</th><td>130.00</td><td><button aria-label="Associate"></button></td></tr>
        <tr><th>Hight_gate</th><td>20.00</td><td><button aria-label="Associate"></button></td></tr>
        <tr><th>Hight_profile</th><td>7.00</td><td><button aria-label="Associate"></button></td></tr>
        <tr><th>Length_gate</th><td>300.00</td><td><button aria-label="Associate"></button></td></tr>
        <tr><th>L_tail_profile</th><td>65.00</td><td><button aria-label="Associate"></button></td></tr>
        <tr><th>depth base</th><td>20.00</td><td><button aria-label="Associate"></button></td></tr>
        <tr><th>depth_gate</th><td>5.00</td><td><button aria-label="Associate"></button></td></tr>
        <tr><th>engle_gate</th><td>89.00°</td><td><button aria-label="Associate"></button></td></tr>
        <tr class="dim"><th>middel of base</th><td>20.00</td><td></td></tr>
        <tr><th>width Base</th><td>40.00</td><td><button aria-label="Associate"></button></td></tr>
        <tr class="head"><th colspan="2">Identity Data</th><td>«</td></tr>
        <tr><th>Image</th><td></td><td></td></tr>
        <tr><th>Comments</th><td></td><td><button aria-label="Associate"></button></td></tr>
        <tr><th>Mark</th><td>17</td><td></td></tr>
        <tr class="head"><th colspan="2">Phasing</th><td>«</td></tr>
        <tr><th>Phase Created</th><td>New Construction</td><td></td></tr>
        <tr><th>Phase Demolished</th><td>None</td><td></td></tr>
        <tr class="head"><th colspan="2">IFC Parameters</th><td>«</td></tr>
        <tr><th>IFC Predefined Type</th><td></td><td></td></tr>
        <tr><th>Export to IFC As</th><td></td><td></td></tr>
        <tr><th>Export to IFC</th><td>By Type</td><td></td></tr>
        <tr><th>IfcGUID</th><td>3rwDLcpuv1hhWLnC66VY9I</td><td></td></tr>
        <tr class="head"><th colspan="2">Electrical - Circuiting</th><td>«</td></tr>
        </tbody>
      </table>
      <div class="pscroll"><i class="up"></i><i class="bar"></i><i class="dn"></i></div>
    </div>
    <div class="pfoot"><button class="sel" aria-label="Group"><svg><use href="#cats"/></svg></button><button aria-label="Sort ascending"><svg><use href="#sort"/></svg></button><button aria-label="Sort descending"><svg><use href="#sort"/></svg></button><button class="apply" disabled>Apply</button></div>
  </aside>
</main>

<div class="status">
  <span class="hint">Hold button and move mouse to Spin the View.</span>
  <svg><use href="#worker"/></svg>
  <div class="mid"><i class="drop"></i><svg><use href="#people"/></svg><span>:0</span><svg class="far"><use href="#list"/></svg><svg><use href="#list2"/></svg><select aria-label="Design option"><option>Main Model</option></select><i class="drop"></i></div>
  <div class="picks"><svg><use href="#sel"/></svg><svg><use href="#selb"/></svg><svg><use href="#selp"/></svg><svg><use href="#self"/></svg><svg><use href="#seld"/></svg><svg><use href="#gear"/></svg><svg><use href="#filter"/></svg><span>:1</span></div>
</div>

<footer class="taskbar">
  <button aria-label="Start"><svg viewBox="0 0 16 16"><path d="M2 4l5-1v5H2zM8 2.800 14 2v6H8zM2 9h5v5l-5-1zM8 9h6v6l-6-1z" fill="#eef1f3"/></svg></button>
  <button aria-label="Search"><svg viewBox="0 0 16 16"><circle cx="9.500" cy="6" r="4.800" fill="none" stroke="#fff" stroke-width="1.500"/><path d="M6 9.500 1 15" stroke="#fff" stroke-width="1.800"/></svg></button>
  <button class="run" aria-label="Files"><svg viewBox="0 0 16 16"><path d="M1 2h6l1 2h7v10H1z" fill="#f2c64d"/><path d="M1 6h14v8H1z" fill="#f9dc7c"/><path d="M4 10h8v5h-2v-2H6v2H4z" fill="#3991d3"/></svg></button>
  <button aria-label="Chrome"><svg viewBox="0 0 16 16"><circle cx="8" cy="8" r="7.500" fill="#38a852"/><path d="M8 8 1.500 4.300A7.500 7.500 0 0 1 14.500 4.300H8z" fill="#e2453c"/><path d="M8 8h0l6.500-3.700A7.500 7.500 0 0 1 8 15.500z" fill="#f6c52d"/><circle cx="8" cy="8" r="3.600" fill="#fff"/><circle cx="8" cy="8" r="2.800" fill="#4384f0"/></svg></button>
  <button class="run now" aria-label="Revit"><svg viewBox="0 0 16 16"><rect x="1" width="14" height="16" rx="1" fill="#1d6fdc"/><path d="M1 0h3v16H1z" fill="#0b4cab"/><text class="t" x="9.500" y="10">R</text><path d="M6 13h6" stroke="#fff"/></svg></button>
  <button aria-label="AutoCAD"><svg viewBox="0 0 16 16"><rect x="1" width="14" height="16" rx="1" fill="#d91f4f"/><path d="M1 0h3v16H1z" fill="#94102f"/><text class="t" x="9.500" y="10">A</text><path d="M6 13h6" stroke="#fff"/></svg></button>
  <button aria-label="Rhino"><svg viewBox="0 0 16 16"><path d="M0 0h16v16H0z" fill="#111"/><path d="M1 1l4 5 3-2 1 3 5-6v6l-3 4 4 1-3 3H8l-4-4-3-5z" fill="#f4f4f4"/><path d="M5 7l4 4" stroke="#111"/></svg></button>
  <button aria-label="Photoshop"><svg viewBox="0 0 16 16"><rect x="1" y="1" width="14" height="14" rx="2" fill="#0a2236"/><text class="t blue" x="8" y="11">Ps</text></svg></button>
  <button aria-label="Illustrator"><svg viewBox="0 0 16 16"><rect x="1" y="1" width="14" height="14" rx="2" fill="#320c03"/><text class="t orange" x="8" y="11">Ai</text></svg></button>
  <button aria-label="Acrobat"><svg viewBox="0 0 16 16"><rect x="2" y="1" width="13" height="14" rx="1" fill="#b41311"/><path d="M8 4c1 4-2 6-4 7 2-2 6-3 9-2-3 1-5-2-5-5" fill="none" stroke="#fff"/></svg></button>
  <button aria-label="Snipping tool"><svg viewBox="0 0 16 16"><ellipse cx="7" cy="6" rx="7" ry="5" fill="#e4e8eb"/><path d="M3 6l9 2" stroke="#dd4747" stroke-width="2"/><path d="M6 8l7 6M11 8l-4 6" stroke="#8ca3b7" stroke-width="1.500"/></svg></button>
  <button aria-label="Player"><svg viewBox="0 0 16 16"><circle cx="8" cy="8" r="7.500" fill="#6847ec"/><path d="M6 12V4h3a2.500 2.500 0 0 1 0 5H6" fill="none" stroke="#fff" stroke-width="1.800"/></svg></button>
  <button aria-label="Web store"><svg viewBox="0 0 16 16"><path d="M3 1h11v3H3z" fill="#cfd4d8"/><path d="M1 4h14v11H1z" fill="#f4f5f6"/><path d="M4 13a4 4 0 0 1 8 0" fill="none" stroke="#db4a3e" stroke-width="2.500"/><circle cx="8" cy="13" r="1.800" fill="#4384f0"/></svg></button>
  <button aria-label="WhatsApp"><svg viewBox="0 0 16 16"><path d="M1 15l1-4a7 7 0 1 1 3 3z" fill="#263b2e" stroke="#38d469" stroke-width="1.500"/><path d="M5 5c0 3 3 6 6 6" stroke="#38d469" stroke-width="2" fill="none"/><circle cx="13" cy="12" r="3" fill="#252b28" stroke="#ddd" stroke-width=".6"/><path d="M13 10.500v3" stroke="#fff"/></svg></button>
  <button aria-label="Calculator"><svg viewBox="0 0 16 16"><path d="M3 1h11v14H3z" fill="#d8e3e9"/><path d="M4 2h9v3H4z" fill="#2b83b8"/><path d="M4 8h2M8 8h2M4 11h2M8 11h2M4 13.500h2M8 13.500h2" stroke="#3087b9" stroke-width="1.500"/><path d="M11 7h2v7h-2z" fill="#52abd9"/></svg></button>
  <button aria-label="Printer"><svg viewBox="0 0 16 16"><path d="M4 1h6v7H4z" fill="#f1c84b"/><path d="M8 2h4v6H8z" fill="#4d98d1"/><path d="M1 8l2-2h11l2 5-2 3H2z" fill="#e8e9e9"/></svg></button>
  <button aria-label="Viewer"><svg viewBox="0 0 16 16"><circle cx="8" cy="8" r="7" fill="#e9f5fa" stroke="#4eb8d5" stroke-width="1.500"/><circle cx="8" cy="7" r="4" fill="#72c6dd"/><path d="M4 14l5-6 3 3" fill="none" stroke="#dd9c63" stroke-width="2"/></svg></button>
  <button aria-label="D5"><svg viewBox="0 0 16 16"><path d="M1 1h15v14H1z" fill="#f1f5f2"/><path d="M5 4v8h3c5 0 5-8 0-8z" fill="none" stroke="#20a264" stroke-width="2"/></svg></button>
  <button aria-label="Spotify"><svg viewBox="0 0 16 16"><circle cx="8" cy="8" r="7.500" fill="#1ed760"/><path d="M3.500 6c3-1 6-.7 9 1M4 8.600c3-.8 5-.5 7.500.9M4.500 11c2-.6 4-.4 6 .7" fill="none" stroke="#17351f" stroke-width="1.300"/></svg></button>
  <button class="run" aria-label="Chrome window"><svg viewBox="0 0 16 16"><circle cx="8" cy="8" r="7.500" fill="#38a852"/><path d="M8 8 1.500 4.300A7.500 7.500 0 0 1 14.500 4.300H8z" fill="#e2453c"/><path d="M8 8h0l6.500-3.700A7.500 7.500 0 0 1 8 15.500z" fill="#f6c52d"/><circle cx="8" cy="8" r="3.600" fill="#fff"/><circle cx="8" cy="8" r="2.800" fill="#4384f0"/></svg></button>
  <button class="run" aria-label="Recorder"><svg viewBox="0 0 16 16"><rect x="1" y="0" width="14" height="15" rx="1" fill="#350c70"/><path d="M10 4a3 3 0 1 0 0 5M11 2v2" fill="none" stroke="#a763f3" stroke-width="1.800"/><circle cx="12" cy="12" r="3" fill="#ee4250"/></svg></button>
  <div class="clock"><span>00:48</span><span>11/06/2025</span></div>
</footer>
</body>
</html>
```
FILE: styles.css
```css
* { box-sizing: border-box; }
html, body { height: 100%; margin: 0; }
body {
  display: flex; flex-direction: column; overflow: hidden;
  background: #1f2830; color: #eef1f4;
  font: 6px/9px "Open Sans", "Noto Sans", "Liberation Sans", sans-serif;
}
h1, h2, ul { margin: 0; padding: 0; font: inherit; list-style: none; }
button, input, select {
  margin: 0; padding: 0; border: 0; border-radius: 0; background: none;
  color: inherit; font: inherit; appearance: none; min-width: 0;
}
button { display: flex; align-items: center; justify-content: center; white-space: nowrap; }
svg { display: block; width: 9px; height: 9px; flex: none; }
.defs { position: absolute; width: 0; height: 0; }
.drop { width: 6px; flex: none; display: flex; align-items: center; justify-content: center; }
.drop::before { content: ""; border: 1px solid transparent; border-top: 2px solid #cfd5db; border-bottom: 0; }
.drop.wide { width: 11px; }
.drop.wide::before { border-width: 2px 2px 0; }

/* title bar */
.titlebar { display: flex; align-items: center; height: 13px; flex: none; background: #1f2932; }
.titlebar h1 { flex: 1; text-align: center; white-space: nowrap; }
.qat, .account { display: flex; align-items: center; height: 13px; }
.qat button { width: 12px; height: 12px; }
.rlogo { width: 12px; height: 13px; }
.logo-r { font: bold 17px "Open Sans", sans-serif; fill: #fff; }
.qat .on { width: 13px; background: #24465a; outline: 1px solid #35728a; outline-offset: -1px; }
.qat .gap { width: 3px; }
.qat .letter { font: bold 9px/12px "Open Sans", sans-serif; }
.account button { width: 13px; height: 11px; }
.account .left { border: 2px solid transparent; border-right-color: #eee; border-left: 0; margin-right: 2px; }
.account .user { width: auto; gap: 2px; margin-right: 6px; color: #c5ccd3; }
.account .trial { width: 22px; background: #6455ee; gap: 2px; color: #fff; }
.account .vline { width: 1px; height: 9px; margin: 0 3px; background: #36424e; }
.account .help { width: 8px; height: 8px; border-radius: 50%; background: #fff; color: #1f2932; font-weight: bold; margin: 0 2px; }

/* ribbon tabs */
.tabs { display: flex; flex: none; height: 12px; gap: 9px; background: #232d36; }
.tabs button { height: 12px; color: #dde2e6; }
.tabs .file { width: 22px; background: #3285a9; color: #fff; margin-right: -1px; }
.tabs .context { background: #3ea317; color: #fff; padding: 0 4px; margin-left: -1px; }
.pill > i:first-child { width: 7px; height: 4px; border-radius: 1px; background: #e6e9ec; }

/* ribbon */
.ribbon { display: flex; flex: none; height: 48px; background: #43524f; }
.ribbon::after { content: ""; flex: 1; border-top: 1px solid #3ea317; }
.group { display: flex; flex-direction: column; flex: none; background: #3b4653; border-right: 1px solid #36414d; }
.group h2 { height: 11px; line-height: 12px; display: flex; justify-content: center; white-space: nowrap; color: #dfe4e8; }
.group.ctx, .ctx h2 { background: #43524f; }
.ctx .body { background: #3b4653; }
.ctx { border-top: 1px solid #3ea317; border-right-color: #43524f; }
.body { flex: 1; display: flex; align-items: flex-start; justify-content: center; gap: 3px; padding-top: 2px; min-height: 0; }
.ctx .body { padding-top: 1px; }
.body .l { width: 16px; height: 16px; }
.body .tall { width: 12px; height: 17px; }
.big { flex-direction: column; justify-content: flex-start; height: 35px; line-height: 7px; padding-top: 1px; gap: 3px; }
.on { background: #2d4c5f; outline: 1px solid #376478; outline-offset: -1px; }
.big.on { width: 23px; }
.big.off { width: 16px; color: #66717d; }
.stack { flex-direction: column; align-items: center; justify-content: flex-start; gap: 1px; }
.stack span { display: flex; padding: 0 1px; }
.col { display: grid; grid-template-rows: repeat(3, 12px); align-items: center; }
.col.text button { justify-content: flex-start; gap: 3px; height: 12px; }
.grid4, .grid3, .grid2 { display: grid; align-items: center; justify-items: center; }
.grid4 { grid-template: repeat(2, 18px) / repeat(4, 20px); }
.grid3 { grid-template: repeat(3, 12px) / repeat(3, 12px); }
.grid2 { grid-template: repeat(2, 18px) / repeat(2, 19px); }
.grid4 .l { width: 15px; height: 15px; }
.g-select { width: 29px; } .g-props { width: 34px; } .g-clip { width: 39px; }
.g-clip .body { gap: 7px; }
.g-geo { width: 71px; } .g-geo .body { gap: 4px; }
.g-ctl { width: 30px; } .g-mod { width: 122px; } .g-mod .body { gap: 1px; }
.g-view { width: 32px; } .g-meas { width: 28px; } .g-create { width: 42px; }
.g-mode { width: 28px; } .g-wp { width: 67px; } .g-place { width: 50px; } .g-sys { width: 44px; }
.g-wp .body { gap: 2px; } .g-wp .drop { height: 52px; }
.big.new { padding-left: 3px; border-left: 1px solid #36414d; }
.g-sys h2 { margin: 0 -4px; }
.opts { grid-template-rows: repeat(2, 12px); padding-top: 5px; }
.opts button { width: 46px; height: 11px; justify-content: flex-start; gap: 2px; padding-left: 1px; color: #5d6975; }
.opts .sel { background: #304f63; outline: 1px solid #315a71; outline-offset: -1px; color: #50697b; }
.optionsbar { flex: none; height: 14px; line-height: 14px; padding-left: 4px; background: #43524f; border-top: 1px solid #394642; color: #dfe5e3; }

/* main area */
main { flex: 1; display: grid; grid-template-columns: 163px 1fr 214px; gap: 2px; min-height: 0; background: #1f2932; }
.browser, .properties { background: #3b4653; min-height: 0; display: flex; flex-direction: column; }
.panelhead { display: flex; justify-content: space-between; align-items: center; height: 10px; flex: none; background: #212a34; padding: 0 1px; color: #fff; font-weight: 600; }
.panelhead svg, .vt svg:last-child:not(:first-child) { width: 7px; height: 7px; }
.search { display: flex; align-items: center; gap: 5px; height: 12px; margin: 4px 5px 4px 4px; padding: 0 4px; background: #2b3541; }
.search input { flex: 1; }
.search input::placeholder { color: #97a1ab; opacity: 1; }
.tree li { display: flex; align-items: center; gap: 2px; height: 10px; padding-left: 2px; white-space: nowrap; }
.tree .hot { background: #343e4a; }
.tree b { width: 7px; font-weight: normal; font-size: 8px; }
.tree .spaced { margin-top: 1px; }
.tree .d1 { padding-left: 11px; } .tree .d2 { padding-left: 19px; } .tree .d3 { padding-left: 36px; }

.workspace { display: flex; flex-direction: column; min-width: 0; min-height: 0; }
.viewtabs { display: flex; height: 12px; flex: none; background: #465162; border-bottom: 1px solid #2b3643; }
.vt { width: 66px; gap: 4px; justify-content: flex-start; padding-left: 1px; color: #eef1f4; }
.vt.active { background: #202a35; font-weight: bold; gap: 3px; padding-right: 1px; }
.vt.active span { flex: 1; text-align: left; }
.viewtabs .drop { margin-left: auto; }
.canvasrow { display: flex; flex: 1; min-height: 0; }
.scene { flex: 1; width: auto; height: 100%; min-width: 0; }
.cubetext { font: bold 5px "Liberation Sans", sans-serif; fill: #666; }
.cubetext.small { font-size: 4px; }
.vscroll { width: 8px; display: flex; flex-direction: column; align-items: center; justify-content: space-between; padding: 3px 0; background: #2b3643; }
.up, .dn { width: 4px; height: 4px; border: solid #aab3bd; border-width: 1px 0 0 1px; transform: rotate(45deg); }
.dn { transform: rotate(225deg); }
.thumb { width: 4px; height: 9px; border-radius: 2px; background: #909aa6; }
.viewbar { display: flex; align-items: center; gap: 4px; height: 11px; flex: none; background: #2b3643; padding-right: 9px; color: #c9d0d6; }
.scale { width: 40px; }
.lt, .gt { font-size: 8px; }
.hscroll { flex: 1; }
.hscroll i { display: block; width: 9px; height: 4px; border-radius: 2px; background: #909aa6; margin: auto; }

.properties { min-width: 0; padding-left: 1px; }
.type { display: flex; align-items: center; gap: 2px; height: 36px; flex: none; padding: 1px; }
.thumbnail { width: 34px; height: 33px; }
.type span { flex: 1; }
.filter { display: flex; align-items: center; height: 15px; flex: none; padding: 0 3px 0 2px; }
.filter select { flex: 1; height: 14px; border-bottom: 1px solid #5b6672; }
.filter button { gap: 2px; margin-left: 5px; }
.tablewrap { flex: 1; display: flex; min-height: 0; margin-top: 2px; overflow: hidden; }
table { flex: 1; height: 100%; border-collapse: collapse; table-layout: fixed; line-height: 8px; }
tr { border-bottom: 1px solid #35404c; }
th, td { padding: 0 0 0 2px; text-align: left; font-weight: normal; white-space: nowrap; overflow: hidden; }
th { width: 98px; padding-left: 4px; }
td { border-left: 1px solid #35404c; }
td:last-child { width: 8px; padding: 0; border: 0; text-align: center; }
td input[type="text"] { display: block; width: 98px; height: 8px; margin-left: -2px; border: 1px solid #b7bec5; }
td input[type="checkbox"] { display: block; width: 6px; height: 6px; margin-left: 1px; border: 1px solid #7a8590; background: #58636f; }
td button { width: 5px; height: 8px; border: 1px solid #596572; margin: auto; }
.head { background: #232d36; color: #fff; }
.head th { padding-left: 1px; font-weight: 700; }
.head td { transform: rotate(90deg); font-size: 8px; line-height: 8px; }
.dim { color: #7f8993; }
.pscroll { width: 8px; display: flex; flex-direction: column; align-items: center; padding: 3px 0; }
.pscroll .bar { flex: 0 1 304px; margin: 14px 0 auto; width: 4px; border-radius: 2px; background: #8490a1; }
.pfoot { display: flex; align-items: center; gap: 2px; height: 11px; flex: none; padding-left: 1px; background: #303b47; }
.pfoot button { width: 11px; height: 11px; }
.pfoot .sel { background: #2c8ba5; }
.pfoot .apply { width: 35px; height: 9px; margin: 0 3px 0 auto; border: 1px solid #414d59; color: #66717d; }

.status { display: grid; grid-template-columns: 455px 115px 1fr auto; align-items: center; height: 12px; flex: none; background: #3b4653; border-top: 1px solid #333e4a; padding: 0 37px 0 1px; }
.mid, .picks { display: flex; align-items: center; gap: 4px; color: #8e98a2; }
.mid .drop { width: 4px; }
.mid .far { margin-left: 7px; }
.mid select { width: 96px; }
.mid svg + span { margin-left: -4px; }
.picks span { margin-left: -4px; color: #dfe3e7; }

.taskbar { display: flex; height: 20px; flex: none; background: linear-gradient(90deg, #272d30, #272e28 55%, #202725); }
.taskbar button { width: 25px; height: 20px; border-bottom: 1px solid transparent; }
.taskbar svg { width: 13px; height: 13px; }
.taskbar .run { border-bottom-color: #6cb8e8; }
.taskbar .now { background: #4a5457; }
.taskbar .t { font: bold 10px "Open Sans", sans-serif; text-anchor: middle; fill: #fff; }
.taskbar .blue { font-size: 8px; fill: #35a8f2; }
.taskbar .orange { font-size: 8px; fill: #f49a26; }
.clock { margin: 1px 3px 0 auto; display: flex; flex-direction: column; align-items: center; color: #fff; }
```
